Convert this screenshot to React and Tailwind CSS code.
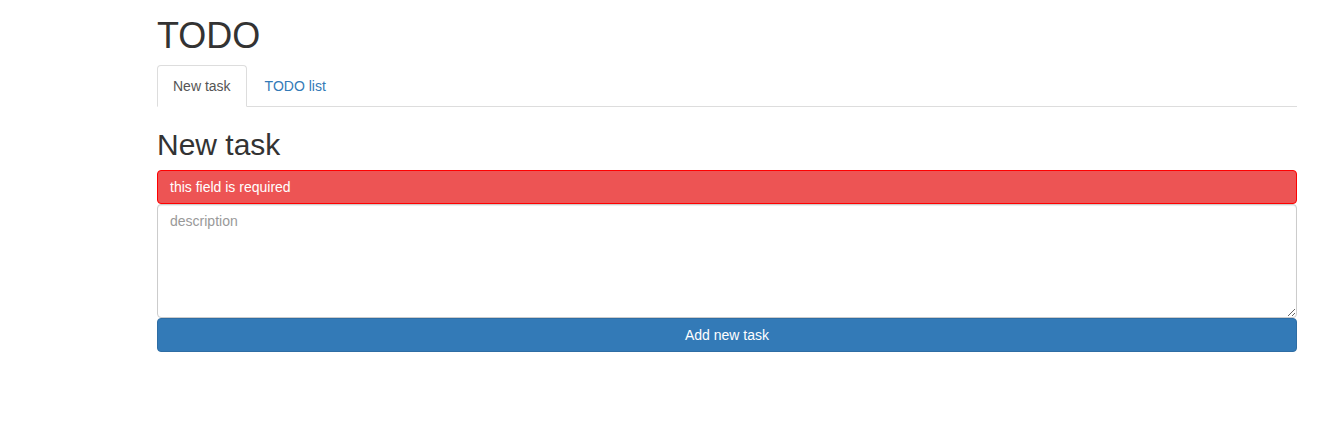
import { useState } from "react";

function App() {
    const [tab, setTab] = useState("new");
    const [text, setText] = useState("");

    return (
        <div className="min-h-[435px] bg-white text-[#333] text-[14px] leading-[20px]" style={{ fontFamily: '"Liberation Sans", Arial, sans-serif' }}>
            <div className="ml-[157px] w-[1140px]">
                <h1 className="pt-[16px] text-[36px] leading-[40px] font-normal">TODO</h1>

                <ul className="mt-[9px] flex border-b border-[#ddd]">
                    <li className="-mb-px mr-[2px]">
                        <button
                            onClick={() => setTab("new")}
                            className={`block px-[15px] py-[10px] rounded-t-[4px] border ${tab === "new" ? "bg-white border-[#ddd] border-b-transparent text-[#555]" : "border-transparent text-[#337ab7]"}`}
                        >
                            New task
                        </button>
                    </li>
                    <li className="-mb-px">
                        <button
                            onClick={() => setTab("list")}
                            className={`block px-[15px] py-[10px] rounded-t-[4px] border ${tab === "list" ? "bg-white border-[#ddd] border-b-transparent text-[#555]" : "border-transparent text-[#337ab7]"}`}
                        >
                            TODO list
                        </button>
                    </li>
                </ul>

                <h2 className="mt-[21px] text-[30px] leading-[33px] font-normal">New task</h2>

                <div className="mt-[9px] flex flex-col">
                    <div className="h-[34px] px-[12px] flex items-center rounded-[4px] border border-[#f00] bg-[#ed5454] text-white">
                        this field is required
                    </div>
                    <textarea
                        value={text}
                        onChange={(e) => setText(e.target.value)}
                        placeholder="description"
                        className="h-[114px] px-[12px] py-[6px] rounded-[4px] border border-[#ccc] shadow-[inset_0_1px_1px_rgba(0,0,0,0.075)] placeholder:text-[#999] outline-none"
                    />
                    <button className="h-[34px] rounded-[4px] border border-[#2e6da4] bg-[#337ab7] text-white">
                        Add new task
                    </button>
                </div>
            </div>
        </div>
    );
}

export default App;
